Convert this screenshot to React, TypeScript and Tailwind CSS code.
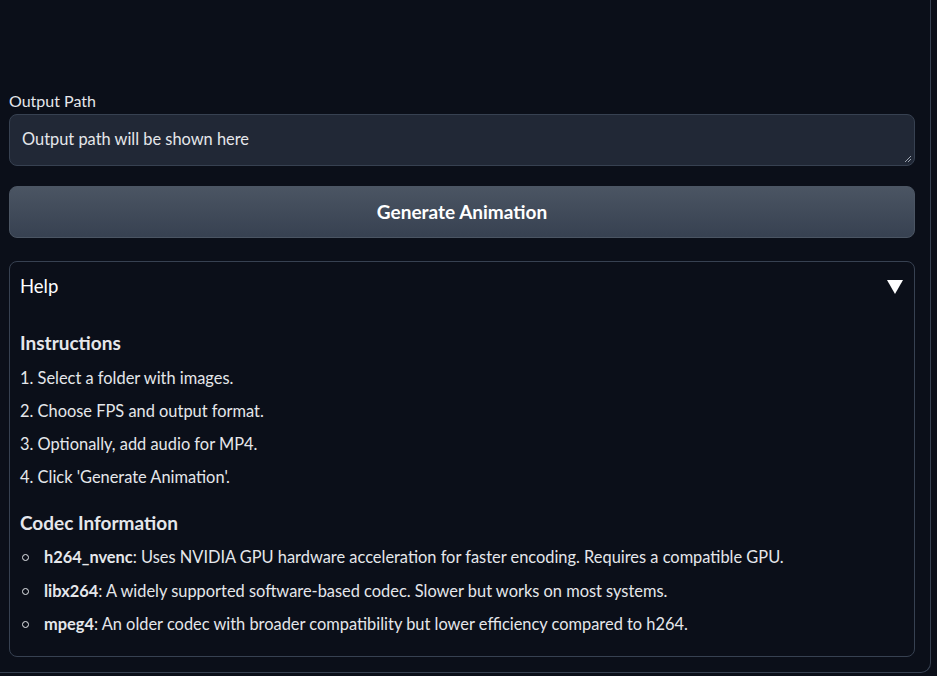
export default function App() {
  const steps = [
    "1. Select a folder with images.",
    "2. Choose FPS and output format.",
    "3. Optionally, add audio for MP4.",
    "4. Click 'Generate Animation'.",
  ];
  const codecs = [
    { name: "h264_nvenc", text: ": Uses NVIDIA GPU hardware acceleration for faster encoding. Requires a compatible GPU." },
    { name: "libx264", text: ": A widely supported software-based codec. Slower but works on most systems." },
    { name: "mpeg4", text: ": An older codec with broader compatibility but lower efficiency compared to h264." },
  ];

  return (
    <div
      className="h-[676px] w-[937px] overflow-hidden bg-[#0b0f19] text-[#e5e7eb]"
      style={{ fontFamily: "Lato, 'Noto Sans', sans-serif" }}
    >
      <div className="w-[931px] h-[673px] border-r border-b border-[#374151] rounded-br-[10px] pl-[9px] pr-[15px] pt-[91px]">
        {/* Output path */}
        <div className="text-[16px] leading-[20px] text-[#e5e7eb]">Output Path</div>
        <div className="relative mt-[3px] h-[52px] rounded-[8px] border border-[#374151] bg-[#212836] px-[12px] flex items-center">
          <span className="text-[16.4px] text-[#e5e7eb] -mt-[1px]">Output path will be shown here</span>
          <svg className="absolute right-[2px] bottom-[2px]" width="8" height="8" viewBox="0 0 8 8">
            <path d="M7 1L1 7M7 4L4 7" stroke="#9ca3af" strokeWidth="1" />
          </svg>
        </div>

        {/* Button */}
        <button className="mt-[20px] w-full h-[52px] rounded-[8px] border border-[#4b5563] bg-gradient-to-b from-[#4b5563] to-[#374151] text-[19px] font-bold text-white">
          Generate Animation
        </button>

        {/* Accordion */}
        <div className="mt-[23px] h-[396px] rounded-[8px] border border-[#374151] px-[10px]">
          <div className="flex items-center justify-between h-[50px]">
            <span className="text-[18.5px] text-white">Help</span>
            <svg className="mr-[1px]" width="16" height="14" viewBox="0 0 16 14">
              <polygon points="0,0 16,0 8,14" fill="#ffffff" />
            </svg>
          </div>
          <div className="pt-[19px]">
            <div className="text-[19px] font-bold leading-[24px] text-[#e5e7eb]">Instructions</div>
            <div className="mt-[7px] flex flex-col">
              {steps.map((s) => (
                <div key={s} className="h-[33px] flex items-center text-[16.4px]">{s}</div>
              ))}
            </div>
            <div className="mt-[17px] text-[19px] font-bold leading-[24px]">Codec Information</div>
            <ul className="mt-[6px] flex flex-col">
              {codecs.map((c) => (
                <li key={c.name} className="h-[33.5px] flex items-center text-[16.4px]">
                  <span className="w-[24px] pl-[2px] flex items-center">
                    <span className="block w-[7px] h-[7px] rounded-full border border-[#e5e7eb]" />
                  </span>
                  <span>
                    <b className="font-bold">{c.name}</b>
                    {c.text}
                  </span>
                </li>
              ))}
            </ul>
          </div>
        </div>
      </div>
    </div>
  );
}
